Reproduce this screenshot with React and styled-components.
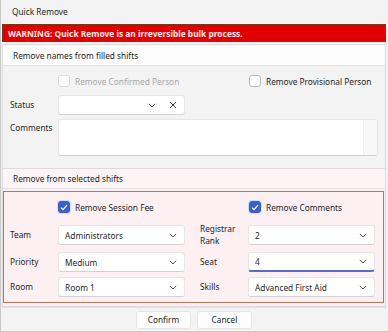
import React from 'react';
import styled, { createGlobalStyle, css } from 'styled-components';

const Global = createGlobalStyle`
    html, body { margin: 0; padding: 0; background: #f3f3f3; }
    body {
        font-family: "Noto Sans", "Open Sans", sans-serif;
        font-size: 8.3px;
        color: #1f1f1f;
    }
`;

const Window = styled.div`
    width: 388px;
    height: 332px;
    box-sizing: border-box;
    background: #f3f3f3;
    border-left: 1px solid #c9c9c9;
    border-bottom: 1px solid #c9c9c9;
    display: flex;
    flex-direction: column;
`;

const TitleBar = styled.div`
    height: 23px;
    display: flex;
    align-items: center;
    padding-left: 11px;
    background: #f3f3f3;
`;

const Warning = styled.div`
    height: 18px;
    box-sizing: border-box;
    margin: 1px 2px 0 1px;
    display: flex;
    align-items: center;
    padding-left: 4px;
    background: #e10000;
    border: 1px solid #6e3b1e;
    border-left-width: 2px;
    color: #ffe8e8;
    font-weight: 700;
    font-size: 8.4px;
`;

const Section = styled.div`
    margin: 2px 2px 0 1px;
    border: 1px solid #dcdcdc;
    ${props => props.pink && css`
        margin-top: 0;
        border-top: none;
        background: #fdeef1;
    `}
`;

const SectionHeader = styled.div`
    height: ${props => props.pink ? '19px' : '20px'};
    display: flex;
    align-items: center;
    padding-left: 10px;
    background: ${props => props.pink ? '#fdf4f6' : '#fcfcfc'};
    border-bottom: 1px solid #e2e2e2;
`;

const SectionBody = styled.div`
    padding: 5px 7px 12px 7px;
    display: flex;
    flex-direction: column;
    gap: 4px;
`;

const AlertBox = styled.div`
    margin: 2px 1px 3px 0;
    border: 1px solid #b7775f;
    background: #fdf0f3;
    padding: 5px 6px 5px 6px;
    display: flex;
    flex-direction: column;
    gap: 6px;
`;

const Grid = styled.div`
    display: grid;
    grid-template-columns: 48px 127px 15px 48px 127px;
    align-items: center;
    row-gap: 5px;
`;

const Label = styled.div`
    line-height: 12px;
`;

const CheckRow = styled.div`
    display: grid;
    grid-template-columns: 48px 191px 1fr;
    align-items: center;
    height: 20px;
`;

const CheckItem = styled.label`
    display: flex;
    align-items: center;
    gap: 5px;
    color: ${props => props.disabled ? '#a9a9a9' : '#1f1f1f'};
`;

const Box = styled.span`
    width: 12px;
    height: 12px;
    box-sizing: border-box;
    border-radius: 3px;
    display: inline-flex;
    align-items: center;
    justify-content: center;
    background: ${props => props.checked ? '#3d5fc4' : '#ffffff'};
    border: 1px solid ${props => props.checked ? '#3d5fc4' : props.disabled ? '#dddddd' : '#b8b8b8'};
    ${props => props.checked && css`
        box-shadow: 0 0 0 1px #bfe0ff;
    `}
`;

const Field = styled.div`
    height: 20px;
    box-sizing: border-box;
    background: #ffffff;
    border: 1px solid #e6e6e6;
    border-bottom: ${props => props.focused ? '2px solid #5a6bc6' : '1px solid #d2d2d2'};
    border-radius: 3px;
    display: flex;
    align-items: center;
    padding: 0 7px 0 6px;
    gap: ${props => props.clearable ? '13px' : '8px'};
`;

const FieldText = styled.span`
    flex: 1;
`;

const TextArea = styled.div`
    height: 37px;
    box-sizing: border-box;
    background: #ffffff;
    border: 1px solid #e6e6e6;
    border-bottom-color: #d2d2d2;
    border-radius: 3px;
    display: flex;
    justify-content: flex-end;
`;

const ScrollTrack = styled.div`
    width: 13px;
    background: #f8f8f8;
    border-left: 1px solid #f0f0f0;
`;

const FormRow = styled.div`
    display: grid;
    grid-template-columns: 48px ${props => props.wide ? '1fr' : '127px'};
    align-items: ${props => props.top ? 'start' : 'center'};
    ${props => props.top && css`
        & > ${Label} { padding-top: 3px; }
    `}
`;

const Footer = styled.div`
    flex: 1;
    display: flex;
    justify-content: center;
    align-items: center;
    gap: 6px;
    border-top: 1px solid #e0e0e0;
    margin: 0 2px 0 1px;
`;

const Button = styled.button`
    width: 55px;
    height: 18px;
    border: 1px solid #e6e6e6;
    border-radius: 3px;
    background: #fdfdfd;
    font: inherit;
    color: #1f1f1f;
    padding: 0;
`;

const Chevron = () => (
    <svg width="8" height="5" viewBox="0 0 8 5">
        <path d="M0.8 0.8 L4 4 L7.2 0.8" fill="none" stroke="#555" strokeWidth="1" />
    </svg>
);

const Cross = () => (
    <svg width="8" height="8" viewBox="0 0 8 8">
        <path d="M1 1 L7 7 M7 1 L1 7" fill="none" stroke="#444" strokeWidth="1" />
    </svg>
);

const Check = ({ checked, disabled, children }) => (
    <CheckItem disabled={disabled}>
        <Box checked={checked} disabled={disabled}>
            {checked && (
                <svg width="8" height="7" viewBox="0 0 8 7">
                    <path d="M1 3.6 L3 5.6 L7 1.2" fill="none" stroke="#fff" strokeWidth="1.2" />
                </svg>
            )}
        </Box>
        {children}
    </CheckItem>
);

const Select = ({ value, focused }) => (
    <Field focused={focused}>
        <FieldText>{value}</FieldText>
        <Chevron />
    </Field>
);

const App = () => {
    return <>
        <Global />
        <Window>
            <TitleBar>Quick Remove</TitleBar>
            <Warning>WARNING: Quick Remove is an irreversible bulk process.</Warning>

            <Section>
                <SectionHeader>Remove names from filled shifts</SectionHeader>
                <SectionBody>
                    <CheckRow>
                        <span />
                        <Check disabled>Remove Confirmed Person</Check>
                        <Check>Remove Provisional Person</Check>
                    </CheckRow>
                    <FormRow>
                        <Label>Status</Label>
                        <Field clearable>
                            <FieldText />
                            <Chevron />
                            <Cross />
                        </Field>
                    </FormRow>
                    <FormRow wide top>
                        <Label>Comments</Label>
                        <TextArea>
                            <ScrollTrack />
                        </TextArea>
                    </FormRow>
                </SectionBody>
            </Section>

            <Section pink>
                <SectionHeader pink>Remove from selected shifts</SectionHeader>
                <AlertBox>
                    <CheckRow>
                        <span />
                        <Check checked>Remove Session Fee</Check>
                        <Check checked>Remove Comments</Check>
                    </CheckRow>
                    <Grid>
                        <Label>Team</Label>
                        <Select value="Administrators" />
                        <span />
                        <Label>Registrar<br />Rank</Label>
                        <Select value="2" />

                        <Label>Priority</Label>
                        <Select value="Medium" />
                        <span />
                        <Label>Seat</Label>
                        <Select value="4" focused />

                        <Label>Room</Label>
                        <Select value="Room 1" />
                        <span />
                        <Label>Skills</Label>
                        <Select value="Advanced First Aid" />
                    </Grid>
                </AlertBox>
            </Section>

            <Footer>
                <Button>Confirm</Button>
                <Button>Cancel</Button>
            </Footer>
        </Window>
    </>;
};

export default App;
